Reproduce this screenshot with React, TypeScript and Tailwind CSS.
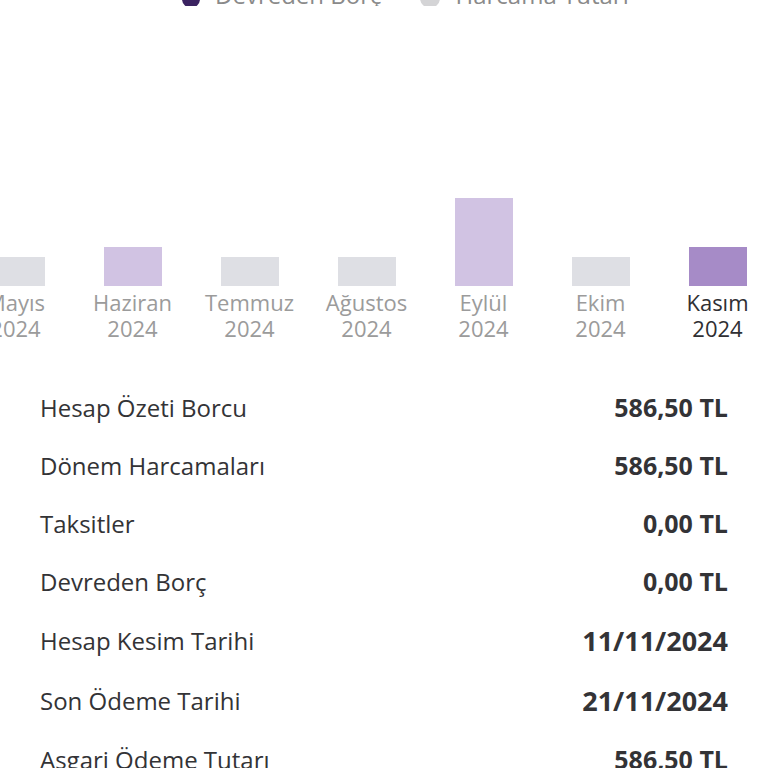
import { FC } from 'react';

interface TMonth {
    name: string;
    year: string;
    height: number;
    tone: 'gray' | 'light' | 'active';
}

interface TRow {
    label: string;
    value: string;
    big?: boolean;
}

const months: TMonth[] = [
    { name: 'Mayıs', year: '2024', height: 29, tone: 'gray' },
    { name: 'Haziran', year: '2024', height: 39, tone: 'light' },
    { name: 'Temmuz', year: '2024', height: 29, tone: 'gray' },
    { name: 'Ağustos', year: '2024', height: 29, tone: 'gray' },
    { name: 'Eylül', year: '2024', height: 88, tone: 'light' },
    { name: 'Ekim', year: '2024', height: 29, tone: 'gray' },
    { name: 'Kasım', year: '2024', height: 39, tone: 'active' },
];

const rows: TRow[] = [
    { label: 'Hesap Özeti Borcu', value: '586,50 TL' },
    { label: 'Dönem Harcamaları', value: '586,50 TL' },
    { label: 'Taksitler', value: '0,00 TL' },
    { label: 'Devreden Borç', value: '0,00 TL' },
    { label: 'Hesap Kesim Tarihi', value: '11/11/2024', big: true },
    { label: 'Son Ödeme Tarihi', value: '21/11/2024', big: true },
    { label: 'Asgari Ödeme Tutarı', value: '586,50 TL' },
];

const barColor = {
    gray: 'bg-[#dedfe4]',
    light: 'bg-[#d1c3e3]',
    active: 'bg-[#a68bc7]',
};

const App: FC = () => {
    return (
        <div
            className="w-[768px] h-[768px] overflow-hidden bg-white"
            style={{ fontFamily: '"Open Sans", "Noto Sans", sans-serif' }}
        >
            {/* legend, mostly scrolled away */}
            <div className="h-[6px] overflow-hidden relative">
                <div className="absolute left-0 right-0 bottom-[-1px] flex items-end pl-[182px] text-[24px] leading-[24px] text-[#8a8a8a]">
                    <div className="flex items-end gap-[15px]">
                        <span className="w-[18px] h-[18px] rounded-full bg-[#3b2361] mb-[-1px]" />
                        <span>Devreden Borç</span>
                    </div>
                    <div className="flex items-end gap-[16px] ml-[38px]">
                        <span className="w-[20px] h-[20px] rounded-full bg-[#d4d4d6] mb-[-1px]" />
                        <span>Harcama Tutarı</span>
                    </div>
                </div>
            </div>

            {/* chart */}
            <div className="overflow-hidden">
                <div className="flex ml-[-43px] w-max">
                    {months.map((m) => (
                        <div
                            key={m.name}
                            className="w-[117px] shrink-0 flex flex-col items-center"
                        >
                            <div className="h-[280px] flex items-end">
                                <div
                                    className={`w-[58px] ${barColor[m.tone]}`}
                                    style={{ height: m.height }}
                                />
                            </div>
                            <div
                                className={`mt-[3px] text-[22px] leading-[26px] text-center ${m.tone === 'active' ? 'text-[#2f2f33]' : 'text-[#9b9b9b]'}`}
                            >
                                <div>{m.name}</div>
                                <div>{m.year}</div>
                            </div>
                        </div>
                    ))}
                </div>
            </div>

            {/* summary */}
            <div className="mt-[38px] flex flex-col px-[40px] text-[#333336]">
                {rows.map((r) => (
                    <div
                        key={r.label}
                        className={`flex items-center justify-between ${r.big ? 'h-[60px]' : 'h-[58px]'}`}
                    >
                        <span className="text-[24px]">{r.label}</span>
                        <span
                            className={`font-bold ${r.big ? 'text-[27px]' : 'text-[25px]'}`}
                        >
                            {r.value}
                        </span>
                    </div>
                ))}
            </div>
        </div>
    );
};

export default App;
